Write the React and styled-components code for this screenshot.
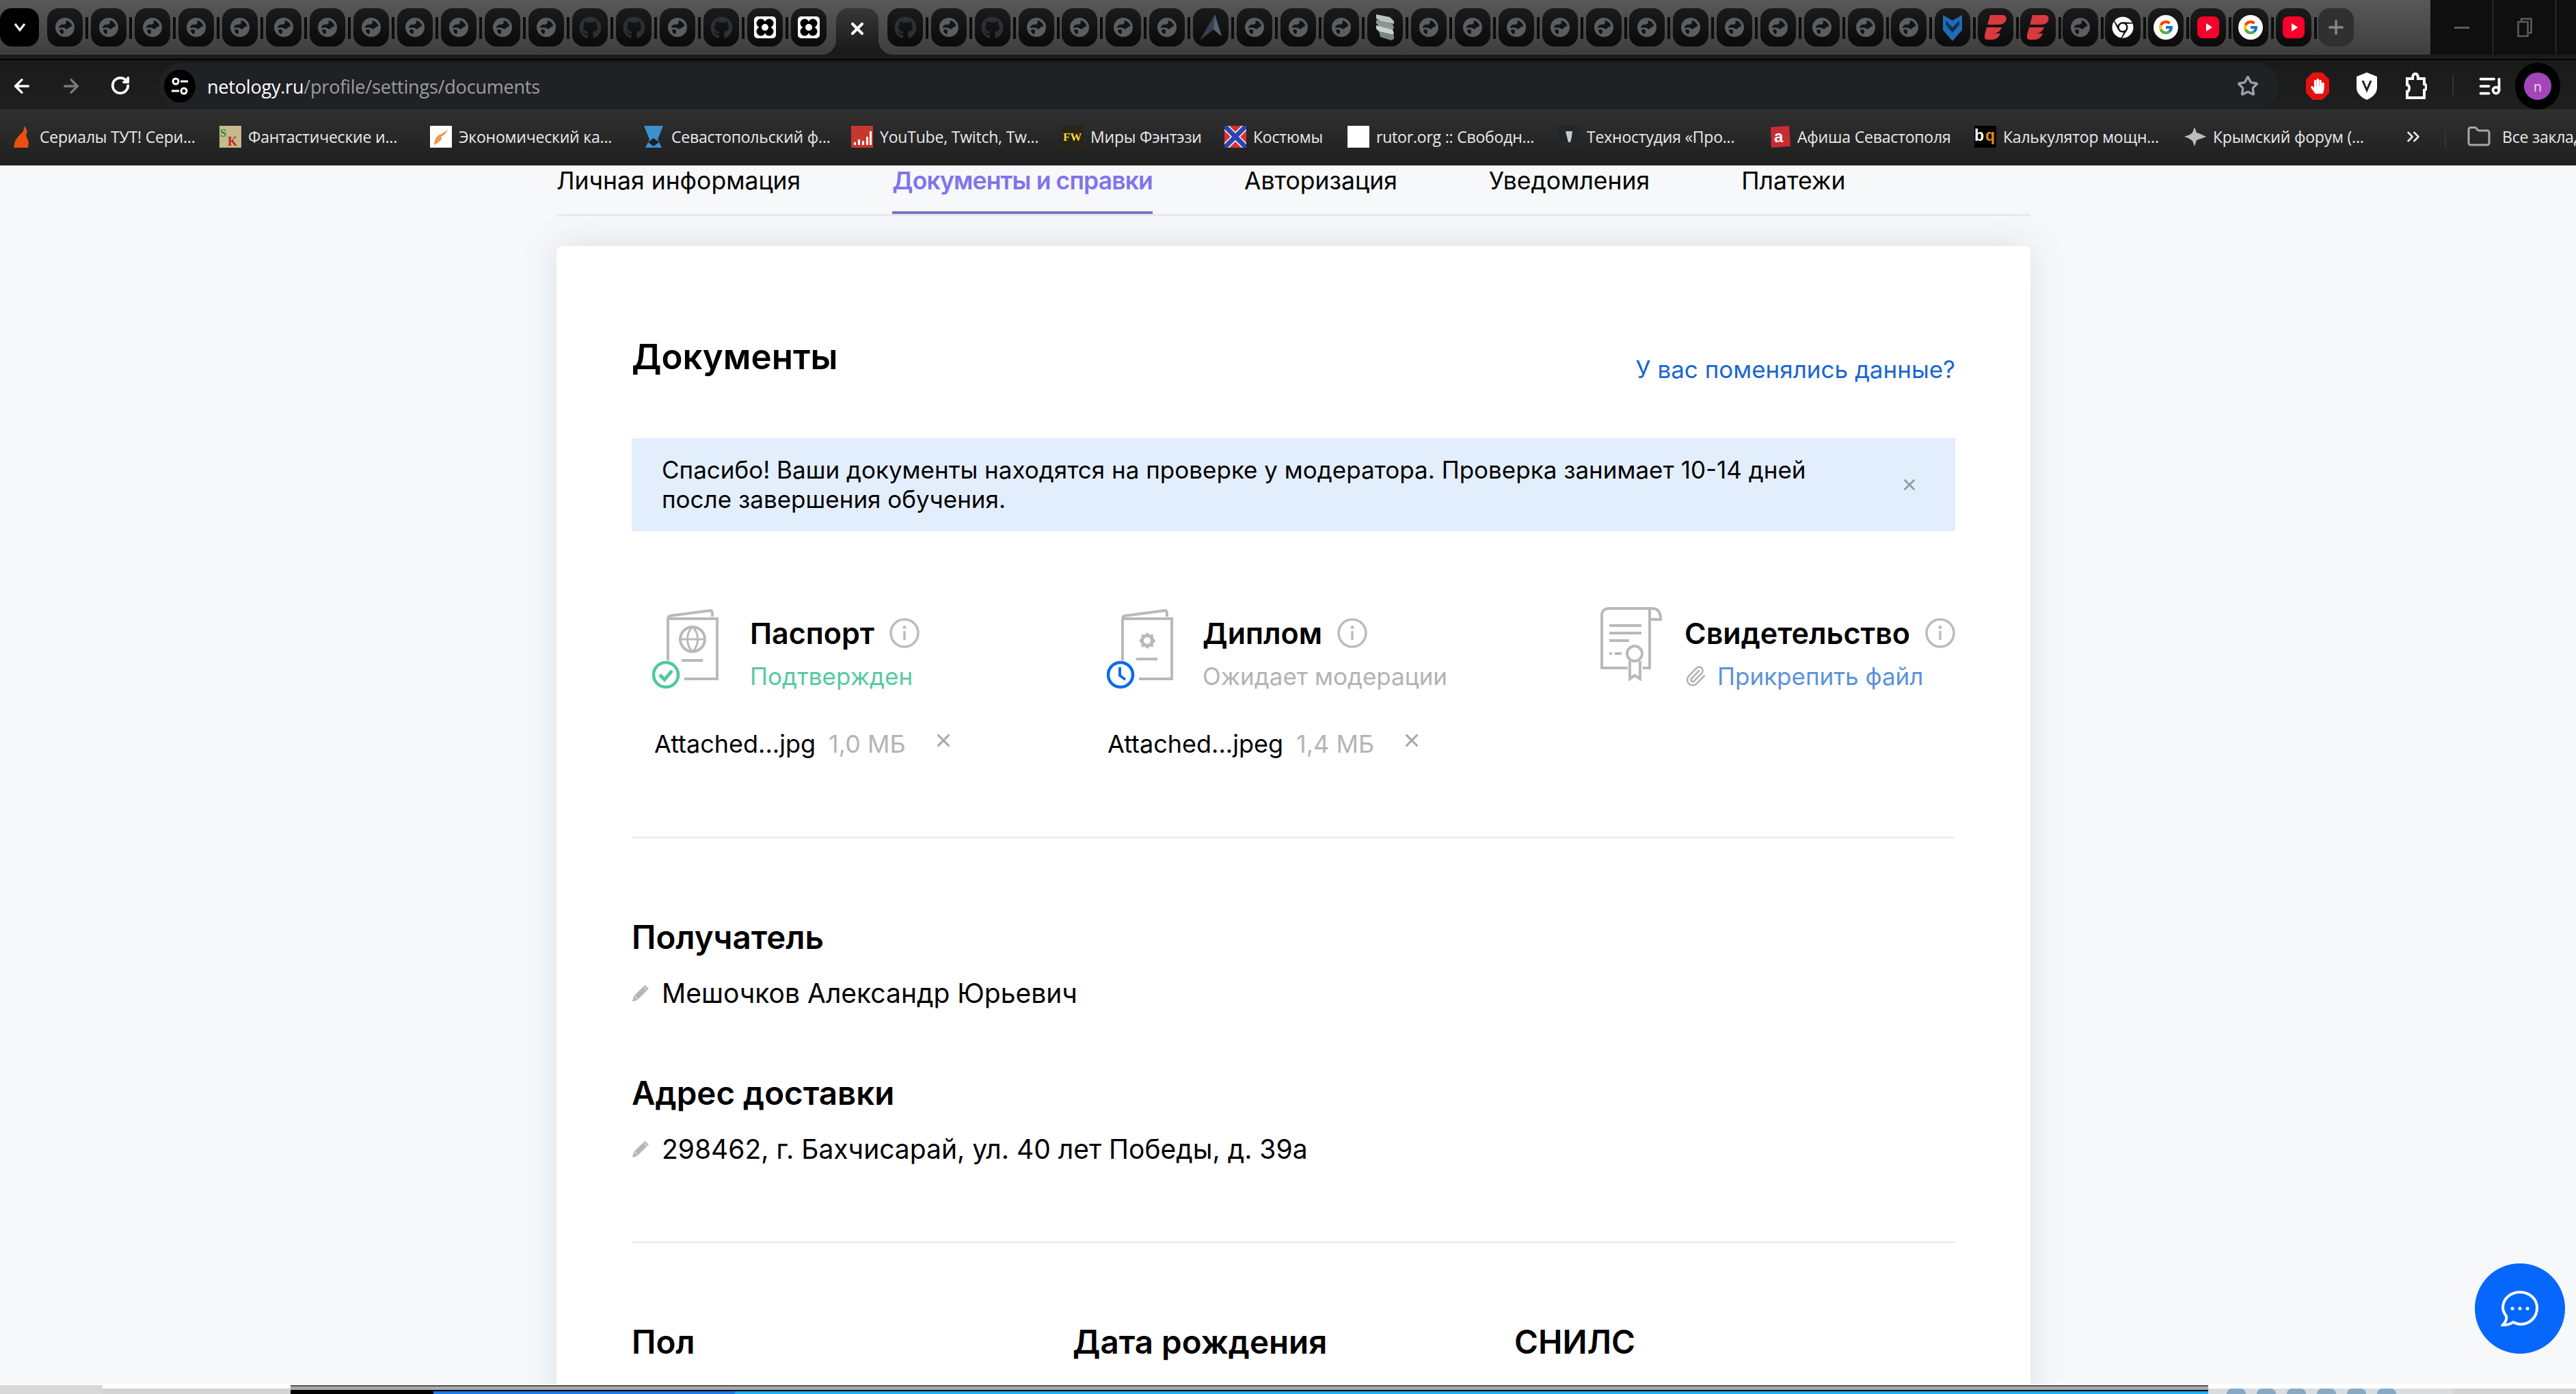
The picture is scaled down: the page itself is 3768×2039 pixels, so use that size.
import React from "react";
import styled, { createGlobalStyle } from "styled-components";
import { ArrowLeft, ArrowRight, RotateCw, Star, ChevronsRight, Folder, Plus, X, Paperclip, ListMusic } from "lucide-react";
import { FaGithub, FaChrome, FaHandPaper } from "react-icons/fa";
import { FcGoogle } from "react-icons/fc";

const GlobalStyle = createGlobalStyle`
  html, body { margin: 0; padding: 0; background: #f6f8fa; }
  * { box-sizing: border-box; }
`;

const Screen = styled.div`
  width: 3768px;
  height: 2039px;
  display: flex;
  flex-direction: column;
  overflow: hidden;
  position: relative;
  font-family: Inter, "Noto Sans", sans-serif;
  color: #000;
`;

/* browser chrome */
const TabStrip = styled.div`
  height: 80px;
  flex: none;
  display: flex;
  padding-top: 12px;
  background: linear-gradient(#585858, #3e3e3e);
`;

const TabPill = styled.div`
  width: ${(p) => (p.$first ? 57 : 52)}px;
  height: 56px;
  flex: none;
  margin-right: ${(p) => p.$m || 12}px;
  display: flex;
  align-items: center;
  justify-content: center;
  position: relative;
  border-radius: 17px;
  background: ${(p) => (p.$first ? "#000" : p.$plus ? "#303030" : "linear-gradient(#1b1b1b, #0a0a0a)")};
  color: ${(p) => (p.$plus ? "#8a8a8a" : "#fff")};
  &::after {
    content: "";
    display: ${(p) => (p.$sep ? "block" : "none")};
    position: absolute;
    right: -8px;
    top: 13px;
    width: 4px;
    height: 32px;
    background: #0c0c0c;
  }
`;

const ActiveTab = styled.div`
  width: 62px;
  height: 68px;
  flex: none;
  margin-left: 2px;
  margin-right: 13px;
  display: flex;
  align-items: flex-start;
  justify-content: center;
  padding-top: 16px;
  position: relative;
  border-radius: 18px 18px 0 0;
  background: linear-gradient(#373737, #181818);
  color: #fff;
  &::before, &::after {
    content: "";
    position: absolute;
    bottom: 0;
    width: 22px;
    height: 22px;
  }
  &::before {
    left: -22px;
    background: radial-gradient(circle at 0 0, transparent 22px, #1a1a1a 22.5px);
  }
  &::after {
    right: -22px;
    background: radial-gradient(circle at 100% 0, transparent 22px, #1a1a1a 22.5px);
  }
`;

const WindowControls = styled.div`
  margin: -12px 0 0 auto;
  width: 213px;
  height: 80px;
  flex: none;
  display: flex;
  background: #0f0f0f;
  color: #5d5d5d;
`;

const WindowButton = styled.div`
  width: 92px;
  flex: none;
  display: flex;
  align-items: center;
  justify-content: center;
  border-right: 1px solid #3c3c3c;
`;

const Toolbar = styled.div`
  height: 80px;
  flex: none;
  display: flex;
  align-items: flex-end;
  background: linear-gradient(#1b1b1b 0, #1b1b1b 6px, #000 6px, #000 8px, #1a1a1a 8px, #1f1f1f);
  color: #fff;
`;

const ToolbarRow = styled.div`
  height: 68px;
  width: 100%;
  display: flex;
  align-items: center;
`;

const NavButton = styled.div`
  width: 72px;
  padding-right: 8px;
  flex: none;
  display: flex;
  justify-content: center;
  color: ${(p) => (p.$dim ? "#7b7b7b" : "#fff")};
`;

const NavGroup = styled.div`
  width: 232px;
  flex: none;
  display: flex;
`;

const Omnibox = styled.div`
  width: 3101px;
  height: 68px;
  flex: none;
  display: flex;
  align-items: center;
  padding: 0 29px 0 8px;
  border-radius: 34px;
  background: #202125;
`;

const SiteInfo = styled.div`
  width: 46px;
  height: 48px;
  flex: none;
  display: flex;
  align-items: center;
  justify-content: center;
  border-radius: 50%;
  background: #000;
`;

const UrlText = styled.div`
  margin-left: 17px;
  font-family: "Open Sans", sans-serif;
  font-size: 27px;
  letter-spacing: -0.2px;
  color: #9c9ea2;
  white-space: nowrap;
  flex: 1;
  b { font-weight: 400; color: #fff; }
`;

const ExtSlot = styled.div`
  width: 72px;
  flex: none;
  display: flex;
  justify-content: center;
  margin-left: ${(p) => p.$left || 0}px;
`;

const HandOverlay = styled.span`
  margin: 9px 6px 0 -28px;
  display: flex;
`;

const ToolDivider = styled.div`
  width: 2px;
  height: 32px;
  flex: none;
  margin-left: ${(p) => p.$left || 0}px;
  background: #333;
`;

const MusicSlot = styled.div`
  width: 90px;
  padding-left: 16px;
  flex: none;
  display: flex;
  justify-content: center;
`;

const AvatarRing = styled.div`
  width: 66px;
  height: 68px;
  flex: none;
  display: flex;
  align-items: center;
  justify-content: center;
  border-radius: 33px;
  background: #000;
`;

const Avatar = styled.div`
  width: 40px;
  height: 40px;
  display: flex;
  align-items: center;
  justify-content: center;
  border-radius: 50%;
  background: #a346b8;
  color: #f0d9f5;
  font-family: "Open Sans", sans-serif;
  font-size: 20px;
`;

const BookmarksBar = styled.div`
  height: 82px;
  flex: none;
  display: flex;
  align-items: center;
  padding: 0 0 2px 16px;
  background: linear-gradient(#303030, #1f1f1f);
  color: #e8eaed;
  overflow: hidden;
`;

const Bookmark = styled.div`
  width: ${(p) => p.$w}px;
  flex: none;
  display: flex;
  align-items: center;
  gap: ${(p) => p.$gap || 10}px;
  margin-left: ${(p) => p.$left || 0}px;
  font-family: "Open Sans", sans-serif;
  font-size: 23px;
  white-space: nowrap;
  letter-spacing: -0.2px;
  svg { flex: none; }
`;

/* page */
const Page = styled.main`
  flex: 1;
  min-height: 0;
  padding-left: 814px;
  overflow: hidden;
  background: #f6f8fa;
`;

const Column = styled.div`
  width: 2156px;
`;

const TabsNav = styled.nav`
  height: 74px;
  display: flex;
  gap: 134px;
  border-bottom: 3px solid #e8eaed;
`;

const NavTab = styled.div`
  height: ${(p) => (p.$active ? "71px" : "auto")};
  margin-bottom: -3px;
  font-size: 35.5px;
  line-height: 46px;
  white-space: nowrap;
  font-weight: ${(p) => (p.$active ? 600 : 400)};
  letter-spacing: ${(p) => (p.$active ? "-0.85px" : "0")};
  color: ${(p) => (p.$active ? "#8174ea" : "#000")};
  border-bottom: ${(p) => (p.$active ? "4px solid #7d74c6" : "none")};
`;

const Card = styled.section`
  margin-top: 44px;
  height: 1800px;
  padding: 128px 110px 0;
  border-radius: 8px;
  background: #fff;
  box-shadow: 0 0 50px rgba(120, 135, 140, 0.2);
`;

const CardHeader = styled.header`
  display: flex;
  justify-content: space-between;
  align-items: flex-start;
  margin-bottom: 79px;
`;

const CardTitle = styled.h1`
  margin: 0;
  font-size: 51px;
  line-height: 68px;
  font-weight: 600;
`;

const ChangeLink = styled.a`
  margin-top: 30px;
  font-size: 35px;
  line-height: 44px;
  color: #1a66d2;
`;

const Notice = styled.div`
  height: 136px;
  display: flex;
  align-items: center;
  justify-content: space-between;
  padding: 0 54px 0 44px;
  background: #e3eefc;
  font-size: 35px;
  line-height: 43px;
  white-space: nowrap;
`;

const DocGrid = styled.div`
  margin-top: 111px;
  display: grid;
  grid-template-columns: 665px 722px 519px;
  padding-left: 30px;
`;

const DocHead = styled.div`
  height: 121px;
  display: flex;
  gap: ${(p) => p.$gap}px;
  svg { flex: none; }
`;

const DocInfo = styled.div`
  padding-top: 12px;
`;

const DocTitle = styled.div`
  display: flex;
  align-items: center;
  gap: 22px;
  font-size: 43px;
  line-height: 52px;
  font-weight: 600;
  white-space: nowrap;
`;

const DocStatus = styled.div`
  margin-top: 15px;
  display: flex;
  align-items: center;
  gap: 16px;
  font-size: 35px;
  line-height: 44px;
  white-space: nowrap;
  color: ${(p) => p.$color};
`;

const FileRow = styled.div`
  margin-top: 57px;
  padding-left: ${(p) => p.$left}px;
  display: flex;
  align-items: center;
  height: 44px;
  font-size: 36px;
  white-space: nowrap;
`;

const FileSize = styled.span`
  margin-left: 19px;
  color: #b4b4b4;
`;

const FileRemove = styled.span`
  margin: -10px 0 0 40px;
  display: flex;
  color: #a8a8a8;
`;

const Divider = styled.hr`
  margin: ${(p) => p.$top}px 0 0;
  border: 0;
  height: 2px;
  background: #e9e9e9;
`;

const SectionTitle = styled.h2`
  margin: ${(p) => p.$top}px 0 0;
  font-size: 47.5px;
  line-height: 60px;
  font-weight: 600;
`;

const ValueRow = styled.div`
  margin-top: 30px;
  display: flex;
  align-items: center;
  gap: 18px;
  font-size: 39px;
  line-height: 44px;
`;

const FieldsRow = styled.div`
  display: grid;
  grid-template-columns: 645px 646px 1fr;
`;

const ChatButton = styled.div`
  position: absolute;
  left: 3620px;
  top: 1848px;
  width: 132px;
  height: 132px;
  display: flex;
  align-items: center;
  justify-content: center;
  border-radius: 50%;
  background: #0567fb;
`;

/* strip of the window under the browser */
const BottomStrip = styled.div`
  height: 15px;
  flex: none;
  display: flex;
  border-top: 2px solid #fff;
  background: #c4c4c4;
`;

const BottomPart = styled.div`
  width: ${(p) => p.$w}px;
  flex: ${(p) => (p.$grow ? 1 : "none")};
  background: ${(p) => p.$bg};
  display: flex;
  align-items: flex-end;
  gap: 16px;
  padding-left: ${(p) => p.$pad || 0}px;
  overflow: hidden;
`;

const Bump = styled.div`
  width: 28px;
  height: 8px;
  flex: none;
  border-radius: 14px 14px 0 0;
  background: #88a9c4;
`;

const GlobeIcon = () => (
  <svg width="28" height="28" viewBox="0 0 28 28">
    <circle cx="14" cy="14" r="14" fill="#5b5d63" />
    <path d="M15 4C19 4 23 7 24.500 12C21 13 19 15 17 17C15 15 10 13 5 15C5 13 7 9 12 10C15 10 17 7 15 4ZM6 18C9 16 13 17 12 21C11.500 23 11 24 10 24C8 23 6 21 6 18Z" fill="#131313" />
  </svg>
);

const GithubIcon = () => <FaGithub size={33} color="#2b3036" />;

const TileIcon = () => (
  <svg width="32" height="32" viewBox="0 0 32 32">
    <rect width="32" height="32" rx="5" fill="#fff" />
    <circle cx="10" cy="10" r="6.500" fill="#000" />
    <circle cx="22" cy="10" r="6.500" fill="#000" />
    <circle cx="10" cy="22" r="6.500" fill="#000" />
    <circle cx="22" cy="22" r="6.500" fill="#000" />
    <circle cx="16" cy="16" r="5" fill="#fff" />
  </svg>
);

const ArrowLogo = () => (
  <svg width="32" height="38" viewBox="0 0 32 38">
    <path d="M22 0L32 32L20 22L0 38Z" fill="#39424f" />
    <path d="M22 0L32 32L20 22Z" fill="#566273" />
  </svg>
);

const StackLogo = () => (
  <svg width="30" height="38" viewBox="0 0 30 38">
    <path d="M2 0L22 4L28 10L28 14L8 10L2 6Z" fill="#b9c4c0" />
    <path d="M2 8L26 14L28 20L26 22L6 17L2 13Z" fill="#8a9894" />
    <path d="M2 16L26 22L28 28L26 30L6 25L2 21Z" fill="#c9d2ce" />
    <path d="M6 25L28 30L28 36L24 38L8 33Z" fill="#798783" />
  </svg>
);

const ShieldLogo = () => (
  <svg width="28" height="40" viewBox="0 0 28 40">
    <path d="M0 2L14 10L28 2V24L14 40L0 24Z" fill="#1f6cb3" />
    <path d="M4 10L14 20L24 10V16L14 28L4 16Z" fill="#0e2f55" />
  </svg>
);

const ExpressLogo = () => (
  <svg width="32" height="36" viewBox="0 0 32 36">
    <path d="M8 0H26C32 0 33 6 30 10C28 13 24 14 20 14H4ZM3 18H25C23 24 18 27 12 27H23C21 33 16 36 10 36H4C0 36 -1 33 0 29Z" fill="#da3940" />
  </svg>
);

const YoutubeLogo = () => (
  <svg width="32" height="32" viewBox="0 0 32 32">
    <rect width="32" height="32" rx="8" fill="#f8002b" />
    <path d="M13 10L22 16L13 22Z" fill="#fff" />
  </svg>
);

const tabIcon = (kind) => {
  if (kind === "globe") return <GlobeIcon />;
  if (kind === "github") return <GithubIcon />;
  if (kind === "tile") return <TileIcon />;
  if (kind === "arrow") return <ArrowLogo />;
  if (kind === "stack") return <StackLogo />;
  if (kind === "shield") return <ShieldLogo />;
  if (kind === "express") return <ExpressLogo />;
  if (kind === "chrome") return <FaChrome size={32} color="#fff" />;
  if (kind === "youtube") return <YoutubeLogo />;
  if (kind === "google")
    return (
      <svg width="36" height="36" viewBox="0 0 36 36">
        <circle cx="18" cy="18" r="18" fill="#fff" />
        <FcGoogle x="6" y="6" size={24} />
      </svg>
    );
  return null;
};

const repeat = (kind, n) => Array(n).fill(kind);

const leftTabs = [
  ...repeat("globe", 12),
  "github", "github", "globe", "github", "tile", "tile",
];

const rightTabs = [
  "github", "globe", "github",
  ...repeat("globe", 4),
  "arrow",
  ...repeat("globe", 3),
  "stack",
  ...repeat("globe", 12),
  "shield", "express", "express", "globe", "chrome", "google", "youtube", "google", "youtube",
];

const Favicon = ({ kind }) => {
  const box = { width: 32, height: 32, viewBox: "0 0 32 32" };
  switch (kind) {
    case "fire":
      return (
        <svg {...box}>
          <path d="M20 0L24 8L22 14L26 24L25 32H4L6 22L12 14L18 8Z" fill="#e9500e" />
        </svg>
      );
    case "sk":
      return (
        <svg {...box}>
          <rect width="32" height="32" fill="#c6b98a" />
          <text x="1" y="16" fontSize="16" fontWeight="700" fill="#1f8a3c" fontFamily="Liberation Serif">S</text>
          <text x="12" y="29" fontSize="18" fontWeight="700" fill="#c0272d" fontFamily="Liberation Serif">K</text>
        </svg>
      );
    case "econ":
      return (
        <svg {...box}>
          <rect width="32" height="32" fill="#fff" />
          <path d="M26 4C24 12 20 14 16 16C20 18 14 24 6 28C6 20 10 14 16 12C20 10 24 8 26 4Z" fill="#f49a4c" />
        </svg>
      );
    case "sev":
      return (
        <svg {...box}>
          <path d="M2 0H30L22 20L28 32H4L10 20Z" fill="#3d8fcf" />
          <path d="M8 24L16 18L24 24L16 30Z" fill="#1f1f1f" />
        </svg>
      );
    case "bars":
      return (
        <svg {...box}>
          <rect width="32" height="32" fill="#c8372d" />
          <path d="M4 24h3v4H4zM10 20h3v8h-3zM16 22h3v6h-3zM22 16h3v12h-3zM27 8h3v20h-3z" fill="#fff" />
        </svg>
      );
    case "fw":
      return (
        <svg {...box}>
          <rect width="32" height="32" fill="#2a2415" />
          <text x="2" y="22" fontSize="17" fontWeight="700" fill="#f0d93a" fontFamily="Liberation Serif">FW</text>
        </svg>
      );
    case "flag":
      return (
        <svg {...box}>
          <rect width="32" height="32" fill="#d8322e" />
          <path d="M0 0L32 32M32 0L0 32" stroke="#fff" strokeWidth="10" />
          <path d="M0 0L32 32M32 0L0 32" stroke="#2a45b0" strokeWidth="7" />
        </svg>
      );
    case "white":
      return (
        <svg {...box}>
          <rect width="32" height="32" fill="#fff" />
        </svg>
      );
    case "tech":
      return (
        <svg {...box}>
          <rect width="32" height="32" fill="#23272b" />
          <path d="M11 8H21L20 16L18 24H15L13 16Z" fill="#c9c9c9" />
        </svg>
      );
    case "afisha":
      return (
        <svg {...box}>
          <path d="M3 2L30 0L32 30L4 32Z" fill="#c92b35" />
          <text x="8" y="24" fontSize="24" fontWeight="700" fill="#fff" fontFamily="Liberation Sans">a</text>
        </svg>
      );
    case "bq":
      return (
        <svg {...box}>
          <rect width="32" height="32" fill="#000" />
          <text x="0" y="22" fontSize="23" fontWeight="700" fill="#fff" fontFamily="Liberation Sans">b</text>
          <text x="16" y="22" fontSize="23" fontWeight="700" fill="#e58a1a" fontFamily="Liberation Sans">q</text>
        </svg>
      );
    case "wave":
      return (
        <svg {...box}>
          <path d="M0 16L8 13L12 10L15 2L18 10L24 12L32 16L24 19L18 21L15 30L12 22L6 18Z" fill="#bdbdbd" />
        </svg>
      );
    default:
      return null;
  }
};

const bookmarks = [
  { icon: "fire", w: 305, text: "Сериалы ТУТ! Сери..." },
  { icon: "sk", w: 308, text: "Фантастические и..." },
  { icon: "econ", w: 311, text: "Экономический ка..." },
  { icon: "sev", w: 305, text: "Севастопольский ф..." },
  { icon: "bars", w: 308, text: "YouTube, Twitch, Tw..." },
  { icon: "fw", w: 238, text: "Миры Фэнтэзи" },
  { icon: "flag", w: 180, text: "Костюмы" },
  { icon: "white", w: 308, text: "rutor.org :: Свободн..." },
  { icon: "tech", w: 308, text: "Техностудия «Про..." },
  { icon: "afisha", w: 301, text: "Афиша Севастополя" },
  { icon: "bq", w: 307, text: "Калькулятор мощн..." },
  { icon: "wave", w: 320, text: "Крымский форум (..." },
];

const InfoIcon = () => (
  <svg width="44" height="44" viewBox="0 0 44 44">
    <circle cx="22" cy="22" r="20" fill="none" stroke="#bcbcbc" strokeWidth="3.500" />
    <circle cx="22" cy="13.500" r="2.500" fill="#bcbcbc" />
    <path d="M22 19V32" stroke="#bcbcbc" strokeWidth="3.500" />
  </svg>
);

const BookletOutline = () => (
  <g fill="none" stroke="#b9b9b9" strokeWidth="4">
    <path d="M23 78V19C23 14 24 13 28 12.500L85 5C88 5 88 7 88 14" />
    <path d="M23 17H95V105H47" />
  </g>
);

const PassportIcon = () => (
  <svg width="97" height="121" viewBox="0 0 97 121">
    <BookletOutline />
    <circle cx="59" cy="47" r="18" fill="none" stroke="#b9b9b9" strokeWidth="4" />
    <path d="M41 47H77M59 29C49 38 49 56 59 65C69 56 69 38 59 29Z" fill="none" stroke="#b9b9b9" strokeWidth="3" />
    <path d="M43 78H74" stroke="#b9b9b9" strokeWidth="4" />
    <circle cx="20" cy="99" r="18" fill="#fff" stroke="#4fc79c" strokeWidth="4.500" />
    <path d="M11 99L18 106L29 93" fill="none" stroke="#4fc79c" strokeWidth="5" />
  </svg>
);

const DiplomaIcon = () => (
  <svg width="97" height="121" viewBox="0 0 97 121">
    <BookletOutline />
    <path d="M59 35L63 39L69 38L69 44L73 49L69 54L69 60L63 59L59 63L55 59L49 60L49 54L45 49L49 44L49 38L55 39Z" fill="#b9b9b9" transform="translate(8.500 7) scale(.86)" />
    <circle cx="59" cy="49" r="5" fill="#fff" />
    <path d="M43 76H74" stroke="#b9b9b9" strokeWidth="4" />
    <circle cx="20" cy="99" r="18" fill="#fff" stroke="#0a6bf0" strokeWidth="4.500" />
    <path d="M19 88V100L27 106" fill="none" stroke="#0a6bf0" strokeWidth="4" />
  </svg>
);

const CertificateIcon = () => (
  <svg width="90" height="108" viewBox="0 0 90 108">
    <g fill="none" stroke="#b9b9b9" strokeWidth="4">
      <path d="M40 89H2V12C2 6 6 2 12 2H76C84 2 88 7 88 18H74" />
      <path d="M72 4C72 8 72 10 72 14V89H62" />
      <circle cx="50" cy="68" r="11" />
      <path d="M43 79V105L50 100L58 105V79" />
    </g>
    <path d="M13 27H60M13 38H60M13 49H42M13 68H17M21 68H31" stroke="#b9b9b9" strokeWidth="4" />
  </svg>
);

const PencilIcon = () => (
  <svg width="26" height="26" viewBox="0 0 26 26">
    <path d="M19 1L25 6L8 23L1 25L3 17Z" fill="#b5b5b5" />
    <path d="M17 3.500L22.500 8.500" stroke="#fff" strokeWidth="1" />
    <path d="M3 16L9 21.500" stroke="#fff" strokeWidth="1" />
  </svg>
);

const ChatIcon = () => (
  <svg width="56" height="54" viewBox="0 0 56 54" fill="none">
    <path d="M28 3C41 3 53 12 53 26C53 40 42 50 29 50C24 50 21 48 18 47C14 50 10 51 3 51C7 47 9 43 8 38C5 34 3 30 3 26C3 12 15 3 28 3Z" stroke="#fff" strokeWidth="4" />
    <circle cx="17" cy="27" r="2.500" fill="#fff" />
    <circle cx="28" cy="27" r="2.500" fill="#fff" />
    <circle cx="39" cy="27" r="2.500" fill="#fff" />
  </svg>
);

export default function App() {
  return (
    <Screen>
      <GlobalStyle />
      <TabStrip>
        <TabPill $first>
          <svg width="18" height="14" viewBox="0 0 18 14">
            <path d="M2 2L9 11L16 2" fill="none" stroke="#fff" strokeWidth="3" />
          </svg>
        </TabPill>
        {leftTabs.map((kind, i) => (
          <TabPill key={i} $sep={i < leftTabs.length - 1}>{tabIcon(kind)}</TabPill>
        ))}
        <ActiveTab>
          <X size={28} strokeWidth={3.5} />
        </ActiveTab>
        {rightTabs.map((kind, i) => (
          <TabPill key={i} $sep $m={i >= 24 ? 10.3 : 11.85}>{tabIcon(kind)}</TabPill>
        ))}
        <TabPill $plus>
          <Plus size={32} strokeWidth={2.5} />
        </TabPill>
        <WindowControls>
          <WindowButton>
            <svg width="22" height="3"><rect width="22" height="3" fill="#5d5d5d" /></svg>
          </WindowButton>
          <WindowButton>
            <svg width="22" height="28" viewBox="0 0 22 28" fill="none" stroke="#5d5d5d" strokeWidth="2.500">
              <rect x="1.500" y="6" width="14" height="21" />
              <path d="M6 6V1.500H20.500V22H15.500" />
            </svg>
          </WindowButton>
        </WindowControls>
      </TabStrip>

      <Toolbar>
        <ToolbarRow>
          <NavGroup>
            <NavButton><ArrowLeft size={32} strokeWidth={2.5} /></NavButton>
            <NavButton $dim><ArrowRight size={32} strokeWidth={2.5} /></NavButton>
            <NavButton><RotateCw size={30} strokeWidth={3} /></NavButton>
          </NavGroup>
          <Omnibox>
            <SiteInfo>
              <svg width="28" height="30" viewBox="0 0 28 30" fill="none" stroke="#fff" strokeWidth="3">
                <circle cx="8" cy="8" r="4" />
                <path d="M15 8H26M2 22H13" />
                <circle cx="20" cy="22" r="4" />
              </svg>
            </SiteInfo>
            <UrlText><b>netology.ru</b>/profile/settings/documents</UrlText>
            <Star size={32} color="#9aa0a6" strokeWidth={2.5} />
          </Omnibox>
          <ExtSlot $left={21}>
            <svg width="34" height="40" viewBox="0 0 34 40">
              <path d="M10 0H24L34 10V30L24 40H10L0 30V10Z" fill="#e4110f" />
            </svg>
            <HandOverlay><FaHandPaper size={22} color="#fff" /></HandOverlay>
          </ExtSlot>
          <ExtSlot>
            <svg width="30" height="40" viewBox="0 0 30 40">
              <path d="M15 0L30 6V22C30 30 24 36 15 40C6 36 0 30 0 22V6Z" fill="#fff" />
              <path d="M9 12L15 26L21 12" fill="none" stroke="#222" strokeWidth="3" />
            </svg>
          </ExtSlot>
          <ExtSlot>
            <svg width="32" height="40" viewBox="0 0 32 40" fill="none" stroke="#fff" strokeWidth="4">
              <path d="M3 9H11C11 4 13 2 15 2C17 2 19 4 19 9H28V17C32 17 32 26 28 26V37H3V28C7 28 7 18 3 18Z" />
            </svg>
          </ExtSlot>
          <ToolDivider $left={17} />
          <MusicSlot>
            <ListMusic size={36} strokeWidth={2.5} />
          </MusicSlot>
          <AvatarRing>
            <Avatar>n</Avatar>
          </AvatarRing>
        </ToolbarRow>
      </Toolbar>

      <BookmarksBar>
        {bookmarks.map((b) => (
          <Bookmark key={b.text} $w={b.w}>
            <Favicon kind={b.icon} />
            <span>{b.text}</span>
          </Bookmark>
        ))}
        <Bookmark $w={61}><ChevronsRight size={30} /></Bookmark>
        <ToolDivider />
        <Bookmark $w={170} $gap={16} $left={30}>
          <Folder size={36} color="#a8a8a8" strokeWidth={2} />
          <span>Все закладки</span>
        </Bookmark>
      </BookmarksBar>

      <Page>
        <Column>
          <TabsNav>
            <NavTab>Личная информация</NavTab>
            <NavTab $active>Документы и справки</NavTab>
            <NavTab>Авторизация</NavTab>
            <NavTab>Уведомления</NavTab>
            <NavTab>Платежи</NavTab>
          </TabsNav>
          <Card>
            <CardHeader>
              <CardTitle>Документы</CardTitle>
              <ChangeLink>У вас поменялись данные?</ChangeLink>
            </CardHeader>
            <Notice>
              <span>
                Спасибо! Ваши документы находятся на проверке у модератора. Проверка занимает 10-14 дней
                <br />
                после завершения обучения.
              </span>
              <X size={26} color="#8f9aa8" strokeWidth={2.5} />
            </Notice>

            <DocGrid>
              <div>
                <DocHead $gap={46}>
                  <PassportIcon />
                  <DocInfo>
                    <DocTitle>Паспорт <InfoIcon /></DocTitle>
                    <DocStatus $color="#56c9a0">Подтвержден</DocStatus>
                  </DocInfo>
                </DocHead>
                <FileRow $left={3}>
                  Attached...jpg<FileSize>1,0 МБ</FileSize>
                  <FileRemove><X size={30} strokeWidth={2.5} /></FileRemove>
                </FileRow>
              </div>
              <div>
                <DocHead $gap={43}>
                  <DiplomaIcon />
                  <DocInfo>
                    <DocTitle>Диплом <InfoIcon /></DocTitle>
                    <DocStatus $color="#b3b3b3">Ожидает модерации</DocStatus>
                  </DocInfo>
                </DocHead>
                <FileRow $left={1}>
                  Attached...jpeg<FileSize>1,4 МБ</FileSize>
                  <FileRemove><X size={30} strokeWidth={2.5} /></FileRemove>
                </FileRow>
              </div>
              <div>
                <DocHead $gap={33}>
                  <CertificateIcon />
                  <DocInfo>
                    <DocTitle>Свидетельство <InfoIcon /></DocTitle>
                    <DocStatus $color="#5b92dc">
                      <Paperclip size={32} color="#b5b5b5" strokeWidth={2} />
                      Прикрепить файл
                    </DocStatus>
                  </DocInfo>
                </DocHead>
              </div>
            </DocGrid>

            <Divider $top={114} />
            <SectionTitle $top={115}>Получатель</SectionTitle>
            <ValueRow><PencilIcon />Мешочков Александр Юрьевич</ValueRow>
            <SectionTitle $top={94}>Адрес доставки</SectionTitle>
            <ValueRow><PencilIcon />298462, г. Бахчисарай, ул. 40 лет Победы, д. 39а</ValueRow>
            <Divider $top={113} />
            <FieldsRow>
              <SectionTitle $top={115}>Пол</SectionTitle>
              <SectionTitle $top={115}>Дата рождения</SectionTitle>
              <SectionTitle $top={115}>СНИЛС</SectionTitle>
            </FieldsRow>
          </Card>
        </Column>
      </Page>

      <BottomStrip>
        <BottomPart $w={150} $bg="#d9d9d9" />
        <BottomPart $w={275} $bg="linear-gradient(#fff 0, #fff 5px, #d4d4d4 5px)" />
        <BottomPart $w={209} $bg="linear-gradient(#555 0, #555 2px, #aaa 2px, #aaa 7px, #000 7px)" />
        <BottomPart $w={441} $bg="linear-gradient(#555 0, #555 2px, #aaa 2px, #aaa 7px, #000 7px, #000 9px, #1e7ce8 9px)" />
        <BottomPart $w={2155} $bg="linear-gradient(#555 0, #555 2px, #aaa 2px, #aaa 7px, #000 7px, #000 9px, #1fb0f5 9px)" />
        <BottomPart $w={358} $pad={27} $bg="linear-gradient(#fff 0, #fff 5px, #d9dde0 5px)">
          {repeat("b", 6).map((b, i) => <Bump key={i} />)}
        </BottomPart>
        <BottomPart $grow $bg="linear-gradient(#fff 0, #fff 5px, #d4d4d4 5px)" />
      </BottomStrip>

      <ChatButton><ChatIcon /></ChatButton>
    </Screen>
  );
}
